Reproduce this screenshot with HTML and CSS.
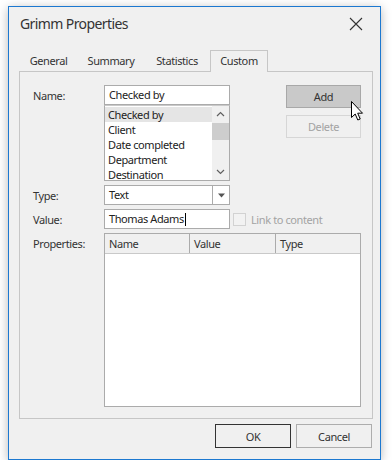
FILE: index.html
```html
<!DOCTYPE html>
<html lang="en">
<head>
    <meta charset="UTF-8">
    <meta name="viewport" content="width=device-width, initial-scale=1.0">
    <title>Grimm Properties</title>
    <link rel="stylesheet" href="styles.css">
</head>
<body>
    <div class="window">
        <div class="titlebar">
            <span class="title">Grimm Properties</span>
            <svg class="close" width="14" height="14" viewBox="0 0 14 14">
                <path d="M1 1 L13 13 M13 1 L1 13" stroke="#333" stroke-width="1.1" fill="none"/>
            </svg>
        </div>

        <div class="tabs">
            <span class="tab tab-general">General</span>
            <span class="tab tab-summary">Summary</span>
            <span class="tab tab-statistics">Statistics</span>
            <span class="tab tab-custom active">Custom</span>
        </div>

        <div class="panel">
            <div class="form">
                <label class="lbl">Name:</label>
                <div class="name-box">
                    <div class="textbox">Checked by</div>
                    <div class="list">
                        <ul class="items">
                            <li class="selected">Checked by</li>
                            <li>Client</li>
                            <li>Date completed</li>
                            <li>Department</li>
                            <li>Destination</li>
                        </ul>
                        <div class="scrollbar">
                            <svg width="17" height="17" viewBox="0 0 17 17"><path d="M5 10 L8.5 6.5 L12 10" stroke="#606060" stroke-width="1.2" fill="none"/></svg>
                            <div class="track"><div class="thumb"></div></div>
                            <svg width="17" height="17" viewBox="0 0 17 17"><path d="M5 7 L8.5 10.5 L12 7" stroke="#606060" stroke-width="1.2" fill="none"/></svg>
                        </div>
                    </div>
                </div>
                <div class="side-buttons">
                    <button class="btn btn-hover">Add</button>
                    <button class="btn btn-disabled">Delete</button>
                    <svg class="pointer" width="13" height="21" viewBox="0 0 13 21">
                        <path d="M0.5 0.5 L0.5 16.5 L4.2 13 L6.8 19 L9.2 18 L6.7 12.2 L11.5 12.2 Z" fill="#fff" stroke="#000" stroke-width="1" stroke-linejoin="miter"/>
                    </svg>
                </div>

                <label class="lbl">Type:</label>
                <div class="textbox combo">
                    <span class="combo-text">Text</span>
                    <span class="combo-btn">
                        <svg width="9" height="5" viewBox="0 0 9 5"><path d="M1 0.5 L8 0.5 L4.5 4.5 Z" fill="#555"/></svg>
                    </span>
                </div>

                <label class="lbl">Value:</label>
                <div class="textbox value">Thomas Adams<span class="caret"></span></div>
                <div class="link">
                    <span class="checkbox"></span>
                    <span>Link to content</span>
                </div>

                <label class="lbl">Properties:</label>
                <div class="grid">
                    <div class="grid-head">
                        <span class="col col-name">Name</span>
                        <span class="col col-value">Value</span>
                        <span class="col col-type">Type</span>
                    </div>
                    <div class="grid-body"></div>
                </div>
            </div>
        </div>

        <div class="footer">
            <button class="btn btn-default">OK</button>
            <button class="btn">Cancel</button>
        </div>
    </div>
</body>
</html>
```

FILE: styles.css
```css
body {
    margin: 0;
    padding: 6px 0 0 8px;
    background: #fff;
    font-family: "Noto Sans", "Open Sans", sans-serif;
    font-size: 11px;
    letter-spacing: -0.4px;
    color: #333;
}
.window {
    width: 371px;
    height: 452px;
    border: 1px solid #1c78d0;
    background: #f0f0f0;
    box-shadow: 0 2px 10px rgba(0, 0, 0, 0.28);
    display: flex;
    flex-direction: column;
}
.titlebar {
    height: 33px;
    display: flex;
    align-items: center;
    justify-content: space-between;
    padding: 0 17px 0 11px;
}
.title {
    font-size: 14px;
    letter-spacing: -0.6px;
    color: #333;
}
.close { display: block; }

.tabs {
    display: flex;
    margin: 10px 0 0 10px;
    height: 21px;
    position: relative;
    z-index: 1;
}
.tab {
    text-align: center;
    line-height: 21px;
    box-sizing: border-box;
}
.tab-general { width: 59px; }
.tab-summary { width: 66px; }
.tab-statistics { width: 66px; }
.tab-custom { width: 58px; }
.tab.active {
    border: 1px solid #c6c6c6;
    border-bottom: none;
    background: #f0f0f0;
    height: 22px;
    line-height: 20px;
}
.panel {
    margin-left: 10px;
    border: 1px solid #c6c6c6;
    padding: 13px 0 0 13px;
    width: 339px;
    height: 333px;
}
.form {
    display: grid;
    grid-template-columns: 71px 126px 56px 75px;
    grid-template-rows: 96px 20px 20px 174px;
    row-gap: 4px;
}
.lbl {
    grid-column: 1;
    padding-top: 3px;
}
.textbox {
    grid-column: 2;
    height: 20px;
    box-sizing: border-box;
    border: 1px solid #ababab;
    background: #fff;
    padding: 0 4px;
    line-height: 18px;
    color: #222;
    display: flex;
    align-items: center;
    white-space: nowrap;
}
.name-box {
    grid-column: 2;
    display: flex;
    flex-direction: column;
}
.list {
    height: 76px;
    box-sizing: border-box;
    border: 1px solid #ababab;
    border-top-color: #c9c9c9;
    background: #fff;
    display: flex;
}
.items {
    list-style: none;
    margin: 0;
    padding: 1px 0 0 0;
    flex: 1;
    color: #222;
}
.items li {
    height: 15px;
    line-height: 15px;
    padding-left: 3px;
}
.items li.selected { background: #e5e5e5; }
.scrollbar {
    width: 17px;
    background: #f0f0f0;
    display: flex;
    flex-direction: column;
}
.scrollbar svg { display: block; }
.track { flex: 1; }
.thumb {
    height: 17px;
    background: #cdcdcd;
}
.side-buttons {
    grid-column: 4;
    display: flex;
    flex-direction: column;
    gap: 7px;
    position: relative;
}
.btn {
    font-family: inherit;
    font-size: 11px;
    letter-spacing: -0.4px;
    color: #333;
    background: #f0f0f0;
    border: 1px solid #adadad;
    height: 23px;
    width: 75px;
    padding: 0;
}
.btn-hover {
    background: #c9c9c9;
    border-color: #a8a8a8;
}
.btn-disabled {
    color: #a3a3a3;
    border-color: #d6d6d6;
}
.pointer {
    position: absolute;
    left: 65px;
    top: 16px;
}
.combo { padding: 0 0 0 4px; }
.combo-text { flex: 1; }
.combo-btn {
    width: 16px;
    height: 18px;
    border-left: 1px solid #ababab;
    display: flex;
    align-items: center;
    justify-content: center;
}
.combo-btn svg { display: block; }
.caret {
    display: inline-block;
    width: 1px;
    height: 13px;
    background: #000;
    margin-left: 1px;
}
.link {
    grid-column: 3 / 5;
    display: flex;
    align-items: center;
    gap: 5px;
    padding-left: 3px;
    color: #a3a3a3;
}
.checkbox {
    width: 11px;
    height: 11px;
    border: 1px solid #d2d2d2;
    background: #f2f2f2;
}
.grid {
    grid-column: 2 / 5;
    border: 1px solid #ababab;
    background: #fff;
    display: flex;
    flex-direction: column;
}
.grid-head {
    display: flex;
    height: 19px;
    border-bottom: 1px solid #c9c9c9;
    background: #f0f0f0;
}
.col {
    line-height: 19px;
    padding-left: 4px;
    box-sizing: border-box;
}
.col-name { width: 85px; border-right: 1px solid #ababab; }
.col-value { width: 86px; border-right: 1px solid #ababab; }
.col-type { flex: 1; }
.grid-body { flex: 1; }
.footer {
    display: flex;
    justify-content: flex-end;
    gap: 5px;
    margin: 5px 8px 0 0;
}
.footer .btn {
    width: 76px;
    height: 24px;
}
.btn-default { border-color: #333; }
```
